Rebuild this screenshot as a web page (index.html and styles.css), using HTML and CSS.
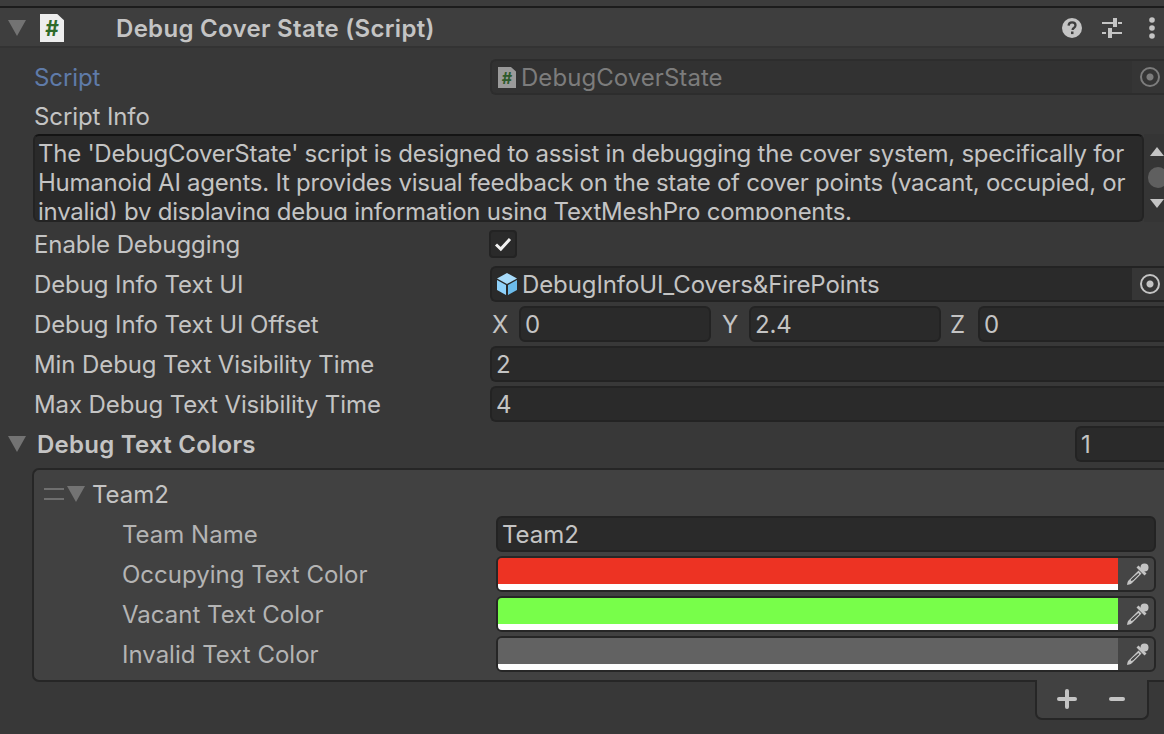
FILE: index.html
```html
<!DOCTYPE html>
<html lang="en">
<head>
    <meta charset="UTF-8">
    <meta name="viewport" content="width=device-width, initial-scale=1.0">
    <title>Debug Cover State (Script)</title>
    <link rel="stylesheet" href="styles.css">
</head>
<body>
    <div class="top-strip"></div>

    <!-- Component header -->
    <div class="header">
        <span class="arrow arrow-main"></span>
        <span class="script-icon">#</span>
        <span class="header-title">Debug Cover State (Script)</span>
        <div class="header-tools">
            <svg class="tool-help" width="22" height="22" viewBox="0 0 22 22"><circle cx="11" cy="11" r="10" fill="#c4c4c4"/><path d="M7.6 8.6c.1-2 1.500-3.200 3.500-3.200s3.400 1.100 3.400 2.900c0 1.300-.7 2-1.700 2.700-.9.600-1.200 1-1.200 1.900" fill="none" stroke="#3e3e3e" stroke-width="2.300"/><rect x="10" y="14.500" width="2.500" height="2.600" fill="#3e3e3e"/></svg>
            <svg class="tool-sliders" width="22" height="22" viewBox="0 0 22 22" fill="#c4c4c4"><rect x="1" y="5" width="11" height="2"/><rect x="12" y="1" width="4" height="9"/><rect x="17" y="5" width="4" height="2"/><rect x="1" y="15" width="4" height="2"/><rect x="7" y="11" width="4" height="10"/><rect x="11" y="15" width="10" height="2"/></svg>
            <svg class="tool-more" width="6" height="22" viewBox="0 0 6 22" fill="#c4c4c4"><circle cx="3" cy="3" r="2.800"/><circle cx="3" cy="11" r="2.800"/><circle cx="3" cy="19" r="2.800"/></svg>
        </div>
    </div>

    <div class="row row-script">
        <label class="label label-low label-link">Script</label>
        <div class="field field-object field-disabled">
            <span class="script-icon script-icon-small">#</span>
            <span class="field-text">DebugCoverState</span>
            <span class="picker picker-disabled"><span class="picker-ring"></span></span>
        </div>
    </div>

    <div class="row row-info"><label class="label label-low">Script Info</label></div>
    <div class="info">
        <div class="info-text">The 'DebugCoverState' script is designed to assist in debugging the cover system, specifically for Humanoid AI agents. It provides visual feedback on the state of cover points (vacant, occupied, or invalid) by displaying debug information using TextMeshPro components.</div>
        <div class="scrollbar">
            <span class="scroll-up"></span>
            <span class="scroll-thumb"></span>
            <span class="scroll-down"></span>
        </div>
    </div>

    <div class="row">
        <label class="label">Enable Debugging</label>
        <div class="checkbox">
            <svg width="18" height="16" viewBox="0 0 18 16"><path d="M2 8.500l4.800 4.500L16 3" fill="none" stroke="#f0f0f0" stroke-width="3"/></svg>
        </div>
    </div>

    <div class="row">
        <label class="label">Debug Info Text UI</label>
        <div class="field field-object">
            <svg class="cube" width="20" height="22" viewBox="0 0 20 22"><path d="M10 0l10 5.500L10 11 0 5.500z" fill="#a8dcfb"/><path d="M0 7l9 5v10l-9-5z" fill="#8fd2fb"/><path d="M20 7l-9 5v10l9-5z" fill="#6cbcec"/></svg>
            <span class="field-text">DebugInfoUI_Covers&amp;FirePoints</span>
            <span class="picker"><span class="picker-ring"></span></span>
        </div>
    </div>

    <div class="row">
        <label class="label">Debug Info Text UI Offset</label>
        <div class="vector">
            <span class="axis">X</span><div class="field field-axis">0</div>
            <span class="axis axis-y">Y</span><div class="field field-axis">2.4</div>
            <span class="axis axis-z">Z</span><div class="field field-axis field-last">0</div>
        </div>
    </div>

    <div class="row">
        <label class="label">Min Debug Text Visibility Time</label>
        <div class="field field-wide">2</div>
    </div>
    <div class="row">
        <label class="label">Max Debug Text Visibility Time</label>
        <div class="field field-wide">4</div>
    </div>

    <div class="row row-foldout">
        <span class="arrow arrow-main"></span>
        <span class="foldout-title">Debug Text Colors</span>
        <div class="field field-count">1</div>
    </div>

    <!-- Reorderable list -->
    <div class="list">
        <div class="list-row list-head">
            <span class="handle"></span>
            <span class="arrow arrow-small"></span>
            <span class="list-title">Team2</span>
        </div>
        <div class="list-row">
            <label class="label list-label">Team Name</label>
            <div class="field list-field">Team2</div>
        </div>
        <div class="list-row">
            <label class="label list-label">Occupying Text Color</label>
            <div class="color-field">
                <div class="swatch"><span class="swatch-color color-red"></span><span class="swatch-alpha"></span></div>
                <span class="dropper"><svg width="22" height="22" viewBox="0 0 22 22" fill="#c4c4c4"><circle cx="17.500" cy="4.500" r="4"/><path d="M9.500 4.500l2-2 8 8-2 2z"/><path d="M11.500 7.500l3 3L5 20c-1 1-2.500 1.700-4 1.800l-1 .2.200-1c.1-1.500.8-3 1.800-4z"/><path d="M11.400 10.600l.4.400-6 6-1.500.5.500-1.500z" fill="#484848" stroke="#484848"/></svg></span>
            </div>
        </div>
        <div class="list-row">
            <label class="label list-label">Vacant Text Color</label>
            <div class="color-field">
                <div class="swatch"><span class="swatch-color color-green"></span><span class="swatch-alpha"></span></div>
                <span class="dropper"><svg width="22" height="22" viewBox="0 0 22 22" fill="#c4c4c4"><circle cx="17.500" cy="4.500" r="4"/><path d="M9.500 4.500l2-2 8 8-2 2z"/><path d="M11.500 7.500l3 3L5 20c-1 1-2.500 1.700-4 1.800l-1 .2.200-1c.1-1.500.8-3 1.800-4z"/><path d="M11.400 10.600l.4.400-6 6-1.500.5.500-1.500z" fill="#484848" stroke="#484848"/></svg></span>
            </div>
        </div>
        <div class="list-row">
            <label class="label list-label">Invalid Text Color</label>
            <div class="color-field">
                <div class="swatch"><span class="swatch-color color-grey"></span><span class="swatch-alpha"></span></div>
                <span class="dropper"><svg width="22" height="22" viewBox="0 0 22 22" fill="#c4c4c4"><circle cx="17.500" cy="4.500" r="4"/><path d="M9.500 4.500l2-2 8 8-2 2z"/><path d="M11.500 7.500l3 3L5 20c-1 1-2.500 1.700-4 1.800l-1 .2.200-1c.1-1.500.8-3 1.800-4z"/><path d="M11.400 10.600l.4.400-6 6-1.500.5.500-1.500z" fill="#484848" stroke="#484848"/></svg></span>
            </div>
        </div>
    </div>
    <div class="list-footer">
        <svg width="20" height="20" viewBox="0 0 20 20" fill="#c4c4c4"><rect x="0" y="8" width="20" height="4" rx="2"/><rect x="8" y="0" width="4" height="20" rx="2"/></svg>
        <svg width="16" height="4" viewBox="0 0 16 4" fill="#c4c4c4"><rect width="16" height="4" rx="2"/></svg>
    </div>
</body>
</html>
```

FILE: styles.css
```css
html, body {
    height: 100%;
}

body {
    margin: 0;
    width: 1164px;
    height: 734px;
    overflow: hidden;
    background: #383838;
    color: #c4c4c4;
    font-family: 'Inter', 'Liberation Sans', sans-serif;
    font-size: 24px;
    letter-spacing: -0.1px;
}

.top-strip {
    height: 6px;
    background: #3c3c3c;
    border-bottom: 2px solid #1c1c1c;
}

/* Component header */
.header {
    box-sizing: border-box;
    height: 40px;
    padding-top: 2px;
    display: flex;
    align-items: center;
    background: #3e3e3e;
    border-bottom: 2px solid #333;
    margin-bottom: 8px;
}

.arrow {
    width: 0;
    height: 0;
    border-left: 9px solid transparent;
    border-right: 9px solid transparent;
    border-top: 16px solid #737373;
    flex: none;
}

.arrow-main {
    margin-left: 8px;
}

.script-icon {
    width: 24px;
    height: 28px;
    margin-left: 14px;
    flex: none;
    display: flex;
    align-items: center;
    justify-content: center;
    background: #eeeeee;
    color: #2f6b2a;
    font-size: 21px;
    font-weight: 700;
    clip-path: polygon(0 0, 72% 0, 100% 22%, 100% 100%, 0 100%);
}

.header-title {
    margin-left: 52px;
    padding-top: 1px;
    font-weight: 600;
    letter-spacing: 0.3px;
}

.header-tools {
    margin-left: auto;
    margin-right: 9px;
    display: flex;
    align-items: center;
}

.tool-sliders {
    margin-left: 18px;
}

.tool-more {
    margin-left: 26px;
}

/* Property rows */
.row {
    height: 40px;
    display: flex;
    align-items: center;
}

.row-script {
    height: 41px;
}

.row-info {
    height: 37px;
}

.label {
    width: 456px;
    padding-left: 34px;
    flex: none;
    white-space: nowrap;
}

.label-low {
    padding-top: 2px;
}

.label-link {
    color: #5f7ba9;
}

.field {
    box-sizing: border-box;
    height: 36px;
    display: flex;
    align-items: center;
    background: #2a2a2a;
    border: 2px solid #232323;
    border-radius: 6px;
    padding-left: 4px;
    white-space: nowrap;
}

.field-object {
    flex: 1;
    border-top-right-radius: 0;
    border-bottom-right-radius: 0;
    border-right: 0;
    overflow: hidden;
}

.field-text {
    margin-left: 5px;
}

.field-disabled {
    background: #323232;
    border-color: #2d2d2d;
    color: #7c7c7c;
}

.field-disabled .field-text {
    margin-top: 2px;
    letter-spacing: 0.05px;
}

.field-wide {
    flex: 1;
    border-right: 0;
    border-top-right-radius: 0;
    border-bottom-right-radius: 0;
}

.script-icon-small {
    width: 18px;
    height: 21px;
    margin-top: 2px;
    margin-left: 2px;
    background: #9a9a9a;
    color: #2e5a2b;
    font-size: 16px;
}

.cube {
    margin-left: 1px;
    flex: none;
}

.picker {
    box-sizing: border-box;
    margin-left: auto;
    align-self: stretch;
    width: 32px;
    padding-left: 3px;
    flex: none;
    display: flex;
    align-items: center;
    justify-content: center;
    background: #363636;
}

.picker-disabled {
    background: #353535;
}

.picker-ring {
    box-sizing: border-box;
    width: 20px;
    height: 20px;
    border: 2px solid #c4c4c4;
    border-radius: 50%;
    background: radial-gradient(circle, #c4c4c4 0 3px, transparent 4px);
}

.picker-disabled .picker-ring {
    border-color: #7c7c7c;
    background: radial-gradient(circle, #7c7c7c 0 3px, transparent 4px);
}

/* Script Info text area */
.info {
    height: 88px;
    margin-bottom: 2px;
    display: flex;
}

.info-text {
    box-sizing: border-box;
    width: 1111px;
    margin-left: 33px;
    height: 88px;
    padding: 3px 4px 0 3px;
    overflow: hidden;
    line-height: 29px;
    letter-spacing: -0.25px;
    background: #2a2a2a;
    border: 2px solid #232323;
    border-top-color: #141414;
    border-radius: 6px;
}

.scrollbar {
    flex: 1;
    position: relative;
    background: #353535;
}

.scroll-up, .scroll-down {
    position: absolute;
    left: 6px;
    width: 0;
    height: 0;
    border-left: 7px solid transparent;
    border-right: 7px solid transparent;
}

.scroll-up {
    top: 13px;
    border-bottom: 9px solid #c4c4c4;
}

.scroll-down {
    top: 65px;
    border-top: 9px solid #c4c4c4;
}

.scroll-thumb {
    position: absolute;
    left: 4px;
    top: 33px;
    width: 20px;
    height: 21px;
    border-radius: 10px;
    background: #5f5f5f;
}

/* Checkbox */
.checkbox {
    box-sizing: border-box;
    width: 28px;
    height: 28px;
    margin-left: -1px;
    display: flex;
    align-items: center;
    justify-content: center;
    background: #2a2a2a;
    border: 2px solid #232323;
    border-radius: 4px;
}

/* Vector3 field */
.vector {
    flex: 1;
    display: flex;
    align-items: center;
}

.axis {
    width: 29px;
    flex: none;
    padding-left: 2px;
    box-sizing: border-box;
}

.axis-y {
    width: 38px;
    padding-left: 11px;
}

.axis-z {
    width: 37px;
    padding-left: 9px;
}

.field-axis {
    width: 192px;
    flex: none;
}

.field-last {
    flex: 1;
    border-right: 0;
    border-top-right-radius: 0;
    border-bottom-right-radius: 0;
}

/* Foldout header */
.row-foldout {
    margin-bottom: 4px;
}

.foldout-title {
    margin-left: 11px;
    font-weight: 600;
    letter-spacing: 0.25px;
}

.field-count {
    margin-left: auto;
    width: 89px;
    border-right: 0;
    border-top-right-radius: 0;
    border-bottom-right-radius: 0;
}

/* Reorderable list */
.list {
    box-sizing: border-box;
    height: 214px;
    margin-left: 32px;
    padding: 4px 8px 0 0;
    background: #414141;
    border: 2px solid #262626;
    border-right: 0;
    border-top-left-radius: 7px;
    border-bottom-left-radius: 7px;
    letter-spacing: 0;
}

.list-row {
    height: 40px;
    display: flex;
    align-items: center;
}

.list-head {
    color: #c4c4c4;
}

.handle {
    width: 20px;
    height: 8px;
    margin-left: 10px;
    flex: none;
    border-top: 2px solid #6f6f6f;
    border-bottom: 2px solid #6f6f6f;
}

.arrow-small {
    margin-left: 3px;
}

.list-title {
    margin-left: 7px;
}

.list-label {
    width: 374px;
    padding-left: 88px;
    color: #b4b4b4;
}

.list-field {
    flex: 1;
}

.color-field {
    flex: 1;
    box-sizing: border-box;
    height: 36px;
    display: flex;
    background: #454545;
    border: 2px solid #262626;
    border-radius: 6px;
    overflow: hidden;
}

.swatch {
    width: 620px;
    flex: none;
    display: flex;
    flex-direction: column;
}

.swatch-color {
    flex: 1;
}

.swatch-alpha {
    height: 6px;
    background: #fff;
}

.color-red {
    background: #ed3323;
}

.color-green {
    background: #78fe4a;
}

.color-grey {
    background: #626262;
}

.dropper {
    flex: 1;
    padding-left: 3px;
    display: flex;
    align-items: center;
    justify-content: center;
}

.list-footer {
    box-sizing: border-box;
    width: 114px;
    height: 40px;
    margin: -2px 0 0 1035px;
    padding-right: 2px;
    display: flex;
    align-items: center;
    justify-content: center;
    gap: 32px;
    position: relative;
    background: #414141;
    border: 2px solid #262626;
    border-top: 0;
    border-bottom-left-radius: 7px;
    border-bottom-right-radius: 7px;
}
```
